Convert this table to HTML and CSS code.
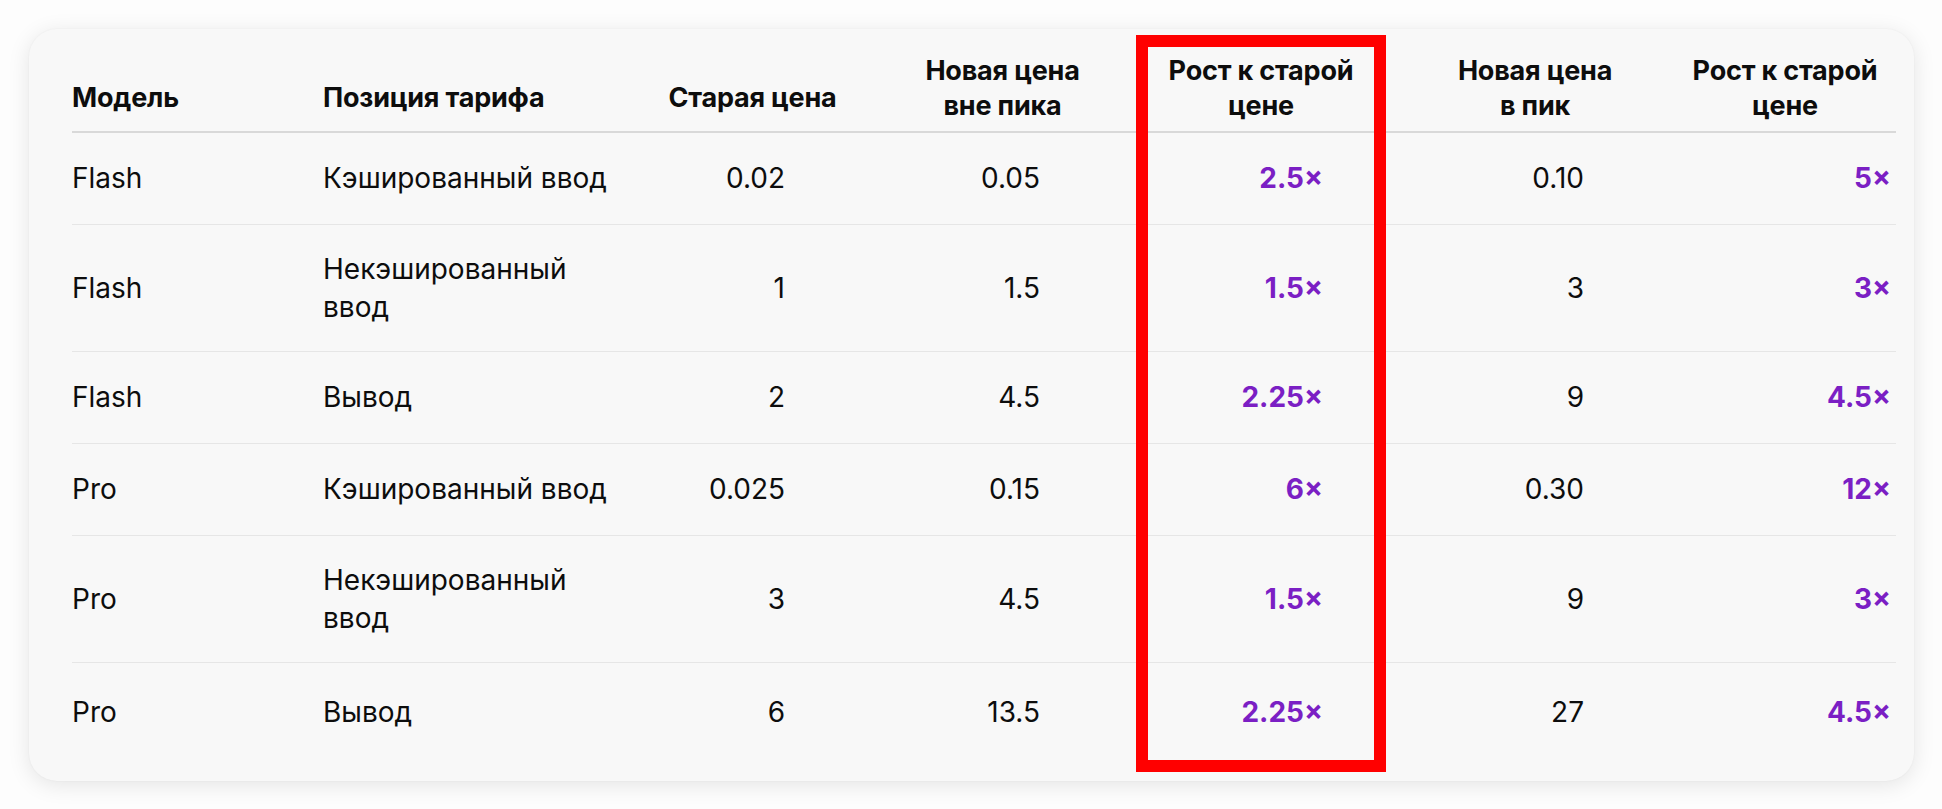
FILE: index.html
```html
<!DOCTYPE html>
<html lang="ru">
<head>
<meta charset="utf-8">
<title>Тарифы</title>
<link rel="stylesheet" href="styles.css">
</head>
<body>
<div class="page">
  <div class="card">
    <table class="prices">
      <colgroup>
        <col class="c1"><col class="c2"><col class="c3"><col class="c4"><col class="c5"><col class="c6"><col class="c7">
      </colgroup>
      <thead>
        <tr>
          <th class="one left">Модель</th>
          <th class="one left">Позиция тарифа</th>
          <th class="one">Старая цена</th>
          <th>Новая цена<br>вне пика</th>
          <th>Рост к старой<br>цене</th>
          <th>Новая цена<br>в пик</th>
          <th class="last">Рост к старой<br>цене</th>
        </tr>
      </thead>
      <tbody>
        <tr>
          <td>Flash</td><td>Кэшированный ввод</td>
          <td class="n3">0.02</td><td class="n4">0.05</td><td class="n5 up">2.5×</td><td class="n6">0.10</td><td class="n7 up">5×</td>
        </tr>
        <tr>
          <td>Flash</td><td>Некэшированный<br>ввод</td>
          <td class="n3">1</td><td class="n4">1.5</td><td class="n5 up">1.5×</td><td class="n6">3</td><td class="n7 up">3×</td>
        </tr>
        <tr>
          <td>Flash</td><td>Вывод</td>
          <td class="n3">2</td><td class="n4">4.5</td><td class="n5 up">2.25×</td><td class="n6">9</td><td class="n7 up">4.5×</td>
        </tr>
        <tr>
          <td>Pro</td><td>Кэшированный ввод</td>
          <td class="n3">0.025</td><td class="n4">0.15</td><td class="n5 up">6×</td><td class="n6">0.30</td><td class="n7 up">12×</td>
        </tr>
        <tr>
          <td>Pro</td><td>Некэшированный<br>ввод</td>
          <td class="n3">3</td><td class="n4">4.5</td><td class="n5 up">1.5×</td><td class="n6">9</td><td class="n7 up">3×</td>
        </tr>
        <tr class="final">
          <td>Pro</td><td>Вывод</td>
          <td class="n3">6</td><td class="n4">13.5</td><td class="n5 up">2.25×</td><td class="n6">27</td><td class="n7 up">4.5×</td>
        </tr>
      </tbody>
    </table>
    <div class="highlight"></div>
  </div>
</div>
</body>
</html>
```
FILE: styles.css
```css
html, body {
  margin: 0;
  padding: 0;
  background: #fdfdfd;
}
body {
  font-family: Inter, "Liberation Sans", "Noto Sans", sans-serif;
  color: #0d0d0d;
}
.page {
  padding: 29px 28px 29px 29px;
}
.card {
  position: relative;
  background: #f8f8f8;
  border-radius: 28px;
  box-shadow: 0 4px 22px rgba(0, 0, 0, 0.10), 0 0 2px rgba(0, 0, 0, 0.05);
  padding: 21px 18px 20px 43px;
}
.prices {
  width: 100%;
  border-collapse: collapse;
  table-layout: fixed;
  font-size: 28px;
}
.c1 { width: 251px; }
.c2 { width: 317px; }
.c3 { width: 225px; }
.c4 { width: 275px; }
.c5 { width: 242px; }
.c6 { width: 306px; }
.c7 { width: 208px; }

.prices th {
  font-size: 27px;
  font-weight: 700;
  line-height: 35px;
  padding: 3px 0 8px 0;
  text-align: center;
  vertical-align: middle;
  border-bottom: 2px solid #d9d9d9;
  letter-spacing: -0.2px;
}
.prices th.one {
  vertical-align: bottom;
  padding-bottom: 16px;
}
.prices th.left {
  text-align: left;
}
.prices th.last {
  padding-right: 14px;
}
.prices tbody tr {
  height: 92px;
}
.prices tbody tr.final {
  height: 99px;
}
.prices td {
  line-height: 38px;
  padding: 25px 0;
  text-align: left;
  vertical-align: middle;
  border-bottom: 1px solid #e6e6e6;
}
.prices tbody tr.final td {
  border-bottom: none;
}
.prices td.n3 { text-align: right; padding-right: 80px; }
.prices td.n4 { text-align: right; padding-right: 100px; }
.prices td.n5 { text-align: right; padding-right: 59px; }
.prices td.n6 { text-align: right; padding-right: 104px; }
.prices td.n7 { text-align: right; padding-right: 5px; }
.prices td.up {
  color: #7b1fc4;
  font-weight: 700;
}
.highlight {
  position: absolute;
  left: 1107px;
  top: 6px;
  width: 226px;
  height: 713px;
  border: 12px solid #ff0000;
  pointer-events: none;
}
```
